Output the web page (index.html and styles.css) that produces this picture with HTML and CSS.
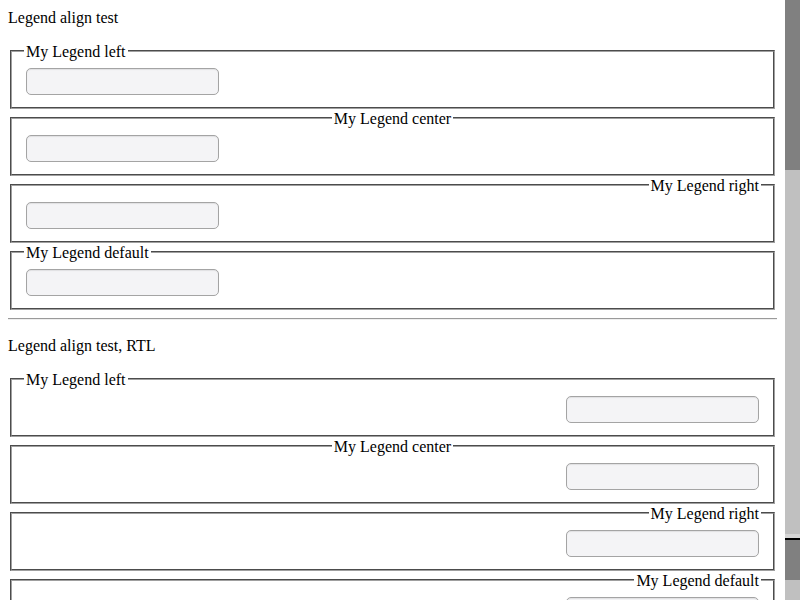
FILE: index.html
```html
<!DOCTYPE html>
<html>
<head>
<meta charset="utf-8">
<link rel="stylesheet" href="styles.css">
</head>
<body>
<div class="page">
  <div class="content">
    <div class="title first">Legend align test</div>
    <form class="group">
      <fieldset><legend class="left">My Legend left</legend><input type="text"></fieldset>
      <fieldset><legend class="center">My Legend center</legend><input type="text"></fieldset>
      <fieldset><legend class="right">My Legend right</legend><input type="text"></fieldset>
      <fieldset><legend>My Legend default</legend><input type="text"></fieldset>
    </form>
    <hr class="rule">
    <div class="title">Legend align test, RTL</div>
    <form class="group" dir="rtl">
      <fieldset><legend class="left">My Legend left</legend><input type="text"></fieldset>
      <fieldset><legend class="center">My Legend center</legend><input type="text"></fieldset>
      <fieldset><legend class="right">My Legend right</legend><input type="text"></fieldset>
      <fieldset><legend>My Legend default</legend><input type="text"></fieldset>
    </form>
  </div>
  <div class="scrollbar">
    <div class="thumb"></div>
    <div class="track grow"></div>
    <div class="band"></div>
    <div class="edge"></div>
    <div class="thumb2"></div>
    <div class="track grow2"></div>
  </div>
</div>
</body>
</html>
```
FILE: styles.css
```css
html, body {
  margin: 0;
  padding: 0;
  background: #fff;
}
body {
  font-family: "Liberation Serif", "Times New Roman", serif;
  font-size: 16px;
  color: #000;
}
.page {
  display: flex;
  height: 600px;
  overflow: hidden;
}
.content {
  flex: 1;
  padding: 8px;
  min-width: 0;
}
.title {
  line-height: 18px;
  padding-top: 1px;
  margin: 16px 0 15px;
}
.title.first {
  margin-top: 0;
}
.group {
  margin: 0;
}
fieldset {
  margin: 0 2px;
  padding: 6px 12px 10px;
  border: 2px groove #a0a0a0;
  min-width: 0;
}
legend {
  padding: 2px 2px 0;
  line-height: 16px;
}
legend.left {
  margin-left: 0;
  margin-right: auto;
}
legend.center {
  margin-left: auto;
  margin-right: auto;
}
legend.right {
  margin-left: auto;
  margin-right: 0;
}
input {
  display: block;
  box-sizing: border-box;
  width: 193px;
  height: 27px;
  margin: 2px;
  border: 1px solid #a4a4a4;
  border-radius: 5px;
  background: #f4f4f6;
  box-shadow: inset 0 1px 1px rgba(0, 0, 0, 0.08);
  font: inherit;
}
.rule {
  margin: 8px 0;
  border: 0;
  border-top: 1px solid #9a9a9a;
  border-bottom: 1px solid #eeeeee;
  height: 0;
}
.scrollbar {
  width: 15px;
  display: flex;
  flex-direction: column;
  background: #c0c0c0;
}
.thumb {
  height: 170px;
  background: #808080;
}
.track {
  background: #c0c0c0;
}
.grow {
  height: 364px;
}
.band {
  height: 4px;
  background: #d6d6d6;
}
.edge {
  height: 2px;
  background: #000;
}
.thumb2 {
  height: 40px;
  background: #808080;
}
.grow2 {
  flex: 1;
}
```
